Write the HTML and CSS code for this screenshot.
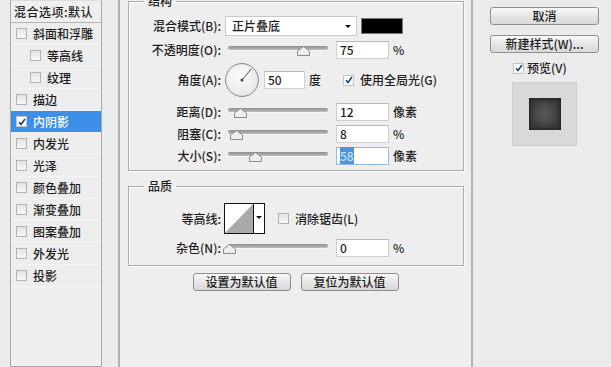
FILE: index.html
```html
<!DOCTYPE html>
<html>
<head>
    <meta charset="utf-8">
    <link rel="stylesheet" href="styles.css">
</head>
<body>
<div class="dialog">
  <div class="style-list">
    <div class="list-head">混合选项:默认</div>
    <div class="list-item"><span class="cb"></span>斜面和浮雕</div>
    <div class="list-item sub"><span class="cb"></span>等高线</div>
    <div class="list-item sub"><span class="cb"></span>纹理</div>
    <div class="list-item"><span class="cb"></span>描边</div>
    <div class="list-item selected"><span class="cb checked"><svg width="8" height="8" viewBox="0 0 8 8"><path d="M1 4.2 L3 6.5 L7 1" fill="none" stroke="#1d3f7a" stroke-width="1.6"/></svg></span>内阴影</div>
    <div class="list-item"><span class="cb"></span>内发光</div>
    <div class="list-item"><span class="cb"></span>光泽</div>
    <div class="list-item"><span class="cb"></span>颜色叠加</div>
    <div class="list-item"><span class="cb"></span>渐变叠加</div>
    <div class="list-item"><span class="cb"></span>图案叠加</div>
    <div class="list-item"><span class="cb"></span>外发光</div>
    <div class="list-item"><span class="cb"></span>投影</div>
  </div>

  <div class="panel">
    <fieldset class="group group-structure">
      <legend>结构</legend>
      <div class="row row-blend">
        <span class="lbl">混合模式(B):</span>
        <div class="select">正片叠底<span class="caret"></span></div>
        <div class="swatch"></div>
      </div>
      <div class="row row-opacity">
        <span class="lbl">不透明度(O):</span>
        <div class="slider"><div class="track"></div><svg class="thumb" style="left:69px" width="13" height="10" viewBox="0 0 13 10"><path d="M6.5 0.5 L12.5 5 V9.5 H0.5 V5 Z" fill="#eeeeee" stroke="#8a8a8a"/></svg></div>
        <div class="field">75</div>
        <span class="unit">%</span>
      </div>
      <div class="row row-angle">
        <span class="lbl">角度(A):</span>
        <div class="dial"><svg width="34" height="34" viewBox="0 0 34 34"><line x1="17" y1="17" x2="26.5" y2="5.7" stroke="#555" stroke-width="1"/><circle cx="17" cy="17" r="1.5" fill="#444"/></svg></div>
        <div class="field field-short">50</div>
        <span class="unit">度</span>
        <span class="cb checked cb-light"><svg width="8" height="8" viewBox="0 0 8 8"><path d="M1 4.2 L3 6.5 L7 1" fill="none" stroke="#1d3f7a" stroke-width="1.6"/></svg></span>
        <span class="cb-text">使用全局光(G)</span>
      </div>
      <div class="row">
        <span class="lbl">距离(D):</span>
        <div class="slider"><div class="track"></div><svg class="thumb" style="left:6px" width="13" height="10" viewBox="0 0 13 10"><path d="M6.5 0.5 L12.5 5 V9.5 H0.5 V5 Z" fill="#eeeeee" stroke="#8a8a8a"/></svg></div>
        <div class="field">12</div>
        <span class="unit">像素</span>
      </div>
      <div class="row">
        <span class="lbl">阻塞(C):</span>
        <div class="slider"><div class="track"></div><svg class="thumb" style="left:2px" width="13" height="10" viewBox="0 0 13 10"><path d="M6.5 0.5 L12.5 5 V9.5 H0.5 V5 Z" fill="#eeeeee" stroke="#8a8a8a"/></svg></div>
        <div class="field">8</div>
        <span class="unit">%</span>
      </div>
      <div class="row">
        <span class="lbl">大小(S):</span>
        <div class="slider"><div class="track"></div><svg class="thumb" style="left:21px" width="13" height="10" viewBox="0 0 13 10"><path d="M6.5 0.5 L12.5 5 V9.5 H0.5 V5 Z" fill="#eeeeee" stroke="#8a8a8a"/></svg></div>
        <div class="field focused"><span class="sel">58</span></div>
        <span class="unit">像素</span>
      </div>
    </fieldset>

    <fieldset class="group group-quality">
      <legend>品质</legend>
      <div class="row row-contour">
        <span class="lbl">等高线:</span>
        <div class="contour">
          <svg class="curve" width="28" height="29" viewBox="0 0 28 29"><rect width="28" height="29" fill="#fff"/><path d="M0 29 L28 0 V29 Z" fill="#a9a9a9"/></svg>
          <div class="contour-btn"><span class="caret"></span></div>
        </div>
        <span class="cb cb-gap"></span>
        <span class="cb-text">消除锯齿(L)</span>
      </div>
      <div class="row">
        <span class="lbl">杂色(N):</span>
        <div class="slider"><div class="track"></div><svg class="thumb" style="left:-5px" width="13" height="10" viewBox="0 0 13 10"><path d="M6.5 0.5 L12.5 5 V9.5 H0.5 V5 Z" fill="#eeeeee" stroke="#8a8a8a"/></svg></div>
        <div class="field">0</div>
        <span class="unit">%</span>
      </div>
    </fieldset>

    <div class="actions">
      <button class="btn btn-wide">设置为默认值</button>
      <button class="btn btn-wide">复位为默认值</button>
    </div>
  </div>

  <div class="side">
    <button class="btn btn-side">取消</button>
    <button class="btn btn-side">新建样式(W)...</button>
    <div class="preview-check">
      <span class="cb checked cb-light"><svg width="8" height="8" viewBox="0 0 8 8"><path d="M1 4.2 L3 6.5 L7 1" fill="none" stroke="#1d3f7a" stroke-width="1.6"/></svg></span>
      <span class="cb-text">预览(V)</span>
    </div>
    <div class="preview">
      <div class="preview-swatch"></div>
    </div>
  </div>
</div>
</body>
</html>
```

FILE: styles.css
```css
body {
  margin: 0;
  background: #ebebeb;
  font: 500 12px/16px "Noto Sans CJK SC", "Liberation Sans", sans-serif;
  color: #1e1e1e;
  overflow: hidden;
}
.dialog {
  display: flex;
  width: 611px;
  height: 367px;
}

/* style list */
.style-list {
  margin-left: 10px;
  width: 90px;
  border: 1px solid #a9a9a9;
  border-top: 1px solid #dcdcdc;
  background: #efefef;
  flex-shrink: 0;
}
.list-head {
  height: 21px;
  line-height: 22px;
  padding-left: 3px;
  letter-spacing: 0.5px;
  border-bottom: 1px solid #b4b4b4;
  white-space: nowrap;
}
.list-item {
  display: flex;
  align-items: center;
  height: 21px;
  padding-left: 5px;
  border-bottom: 1px solid #f5f5f5;
  background: #ededed;
  white-space: nowrap;
}
.list-item.sub {
  padding-left: 19px;
}
.list-item.selected {
  background: #3d8ee6;
  color: #fff;
}
.cb {
  display: inline-flex;
  align-items: center;
  justify-content: center;
  width: 9px;
  height: 9px;
  border: 1px solid #b3b3b3;
  background: linear-gradient(#e4e4e4, #f8f8f8);
  margin-right: 6px;
  flex-shrink: 0;
}
.cb.checked {
  background: #fff;
  border-color: #c4c4c4;
}
.cb-light {
  border-color: #8e9fb8;
  background: linear-gradient(#dfe6f0, #f6f8fb);
}
.cb-text {
  white-space: nowrap;
}

/* middle panel */
.panel {
  margin-left: 16px;
  width: 351px;
  border-left: 2px solid #b2b2b2;
  border-right: 2px solid #b2b2b2;
  background: #eeeeee;
  flex-shrink: 0;
}
.group {
  margin: 0 7px 0 8px;
  padding: 0 6px 0 15px;
  border: 1px solid #adadad;
  box-shadow: 1px 1px 0 #fafafa, inset 1px 1px 0 #fafafa;
  min-width: 0;
}
.group legend {
  padding: 0 4px;
  line-height: 16px;
  font-size: 12px;
}
.group-structure {
  margin-top: -7px;
  padding-top: 6px;
  padding-bottom: 3px;
}
.group-quality {
  margin-top: 7px;
  padding-top: 9px;
  padding-bottom: 6px;
}
.row {
  display: flex;
  align-items: center;
  height: 22px;
}
.row-blend {
  height: 21px;
  margin-bottom: 3px;
}
.row-opacity {
  margin-bottom: 1px;
}
.row-angle {
  height: 36px;
  margin-bottom: 3px;
}
.row-contour {
  height: 31px;
  margin-bottom: 3px;
}
.lbl {
  width: 77px;
  text-align: right;
  white-space: nowrap;
  flex-shrink: 0;
}
.select {
  position: relative;
  width: 124px;
  height: 18px;
  margin-left: 4px;
  padding-left: 6px;
  line-height: 18px;
  background: #fff;
  border: 1px solid #c9c9c9;
}
.caret {
  position: absolute;
  right: 5px;
  top: 8px;
  width: 0;
  height: 0;
  border-left: 3px solid transparent;
  border-right: 3px solid transparent;
  border-top: 3px solid #111;
}
.swatch {
  width: 40px;
  height: 14px;
  margin-left: 4px;
  background: #000;
  border: 1px solid #777;
}
.slider {
  position: relative;
  width: 100px;
  height: 14px;
  margin-left: 7px;
  flex-shrink: 0;
}
.track {
  position: absolute;
  left: 0;
  right: 0;
  top: 3px;
  height: 4px;
  border-radius: 2px;
  background: linear-gradient(#8e8e8e, #bdbdbd);
  box-shadow: 0 1px 0 #f7f7f7;
}
.thumb {
  position: absolute;
  top: 3px;
}
.field {
  width: 48px;
  height: 16px;
  margin-left: 8px;
  padding-left: 3px;
  line-height: 16px;
  background: #fff;
  border: 1px solid #cfcfcf;
  border-top-color: #b9b9b9;
  flex-shrink: 0;
}
.field-short {
  width: 36px;
  margin-left: 5px;
}
.field.focused {
  border-color: #8fb9e6;
}
.sel {
  background: #4f93db;
  color: #bfe0ff;
}
.unit {
  margin-left: 4px;
  margin-right: 22px;
  white-space: nowrap;
}
.dial {
  width: 32px;
  height: 32px;
  margin-left: 4px;
  border: 1px solid #8d8d8d;
  border-radius: 50%;
  background: radial-gradient(circle at 40% 35%, #fbfbfb, #e2e2e2);
  box-shadow: inset 0 0 2px #cfcfcf;
  flex-shrink: 0;
}
.dial svg {
  display: block;
  margin: -1px;
}
.contour {
  display: flex;
  height: 29px;
  margin-left: 3px;
  border: 1px solid #111;
  flex-shrink: 0;
}
.curve {
  display: block;
}
.contour-btn {
  position: relative;
  width: 10px;
  border-left: 1px solid #111;
  background: #fff;
}
.contour-btn .caret {
  right: 2px;
  top: 12px;
}
.cb-gap {
  margin-left: 13px;
}

.actions {
  display: flex;
  justify-content: center;
  gap: 10px;
  margin-top: 7px;
}
.btn {
  height: 18px;
  padding: 0;
  font: 500 12px/16px "Noto Sans CJK SC", "Liberation Sans", sans-serif;
  color: #1e1e1e;
  border: 1px solid #8f8f8f;
  border-radius: 3px;
  background: linear-gradient(#fafafa, #e4e4e4 55%, #d9d9d9);
}
.btn-wide {
  width: 98px;
}

/* right column */
.side {
  display: flex;
  flex-direction: column;
  padding-left: 17px;
}
.btn-side {
  width: 109px;
  margin-top: 7px;
}
.btn-side + .btn-side {
  margin-top: 10px;
}
.preview-check {
  display: flex;
  align-items: center;
  height: 16px;
  margin-top: 7px;
  padding-left: 23px;
}
.preview-check .cb {
  margin-right: 3px;
}
.preview {
  display: flex;
  align-items: center;
  justify-content: center;
  width: 63px;
  height: 62px;
  margin: 6px 0 0 22px;
  background: #d9d9d9;
  border: 1px solid #cfcfcf;
}
.preview-swatch {
  width: 32px;
  height: 32px;
  background: radial-gradient(#5a5a5a, #3a3a3a 70%);
  box-shadow: inset 0 0 4px #111;
}
```
